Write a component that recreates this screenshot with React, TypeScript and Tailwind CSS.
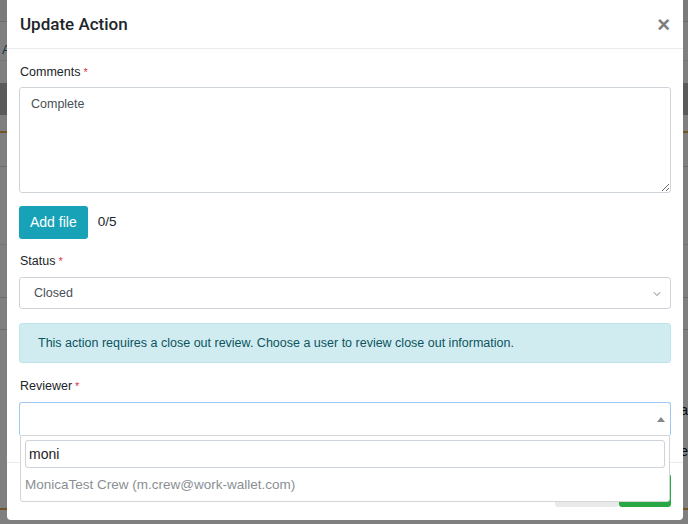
import { ChevronDown } from "lucide-react";

function Req() {
  return <span className="text-[#dc3545] text-[11px] align-top ml-[3px]">*</span>;
}

function Backdrop() {
  // the page that sits behind the modal, only its edges show
  return (
    <div className="flex flex-col w-full h-full bg-white">
      <div className="h-[22px] shrink-0 bg-[#f4f4f4] border-b border-[#d8d8d8]" />
      <div className="h-[18px] shrink-0" />
      <div className="h-[20px] shrink-0 flex items-center pl-[2px] text-[13px] text-[#2a6f8f]">A</div>
      <div className="h-[23px] shrink-0 border-t border-[#ececec]" />
      <div className="h-[32px] shrink-0 bg-[#b4b4b4]" />
      <div className="h-[18px] shrink-0 border-b-2 border-[#e0a848]" />
      <div className="h-[34px] shrink-0 border-b border-[#d8d8d8]" />
      <div className="h-[78px] shrink-0 border-b border-[#e4e4e4]" />
      <div className="h-[53px] shrink-0 border-b border-[#d8d8d8]" />
      <div className="h-[32px] shrink-0 border-b border-[#d8d8d8]" />
      <div className="h-[70px] shrink-0" />
      <div className="h-[20px] shrink-0 flex items-center justify-end text-[14px] text-[#111]">a</div>
      <div className="h-[21px] shrink-0" />
      <div className="h-[20px] shrink-0 flex items-center justify-end text-[14px] text-[#111]">e</div>
      <div className="h-[49px] shrink-0 border-b-2 border-[#e0a848]" />
    </div>
  );
}

export default function App() {
  return (
    <div className="relative w-[688px] h-[524px] overflow-hidden font-['Liberation_Sans',Arial,sans-serif] text-[#212529]">
      <Backdrop />
      <div className="absolute inset-0 bg-black/50" />

      <div className="absolute left-[7px] top-0 w-[676px] h-[520px] bg-white rounded-b-[4px] flex flex-col">
        {/* header */}
        <div className="h-[49px] shrink-0 border-b border-[#e9ecef] flex items-center justify-between pl-[13px] pr-[13px] pt-[1px]">
          <h5 className="font-['Roboto',Arial,sans-serif] text-[17px] font-medium text-[#212529]">Update Action</h5>
          <span className="text-[22px] font-bold leading-none text-[#7d7d7d]">×</span>
        </div>

        {/* body */}
        <div className="flex-1 px-[12px] pt-[13px] flex flex-col">
          <label className="text-[12.5px] leading-[20px] mb-[5px] pl-[1px]">
            Comments
            <Req />
          </label>
          <textarea
            readOnly
            defaultValue="Complete"
            className="h-[106px] w-full border border-[#ced4da] rounded-[3px] px-[11px] py-[6px] text-[12.5px] leading-[20px] text-[#495057] outline-none"
          />

          <div className="flex items-center gap-[10px] mt-[13px]">
            <button className="h-[33px] px-[11px] rounded-[3px] bg-[#17a2b8] text-white text-[14px]">Add file</button>
            <span className="text-[13.5px]">0/5</span>
          </div>

          <label className="text-[12.5px] leading-[20px] mt-[12px] mb-[6px] pl-[1px]">
            Status
            <Req />
          </label>
          <div className="h-[32px] border border-[#ced4da] rounded-[3px] flex items-center justify-between pl-[14px] pr-[7px] text-[12.5px] text-[#495057] pt-[1px]">
            <span>Closed</span>
            <ChevronDown size={12} strokeWidth={1.5} className="text-[#555]" />
          </div>

          <div className="mt-[14px] h-[40px] rounded-[3px] bg-[#d1ecf1] border border-[#bee5eb] text-[#0c5460] text-[12.5px] flex items-center pl-[18px] pt-[1px]">
            This action requires a close out review. Choose a user to review close out information.
          </div>

          <label className="text-[12.5px] leading-[20px] mt-[13px] mb-[6px] pl-[1px]">
            Reviewer
            <Req />
          </label>
          <div className="relative">
            <div className="h-[33px] border border-b-0 border-[#9ec9f5] rounded-t-[3px] flex items-center justify-end pr-[5px]">
              <span className="w-0 h-0 border-l-[4px] border-r-[4px] border-b-[5px] border-l-transparent border-r-transparent border-b-[#888]" />
            </div>
            <div className="absolute z-10 left-[1px] right-[1px] top-full bg-white border border-[#d5d5d5] rounded-b-[3px] flex flex-col">
              <div className="px-[4px] pt-[4px]">
                <div className="h-[28px] border border-[#ccd3da] rounded-[3px] flex items-center pl-[3px] pt-[1px] text-[14px] text-[#222]">moni</div>
              </div>
              <div className="h-[33px] flex items-center pl-[4px] pt-[2px] text-[13.5px] text-[#8a8f94]">
                MonicaTest Crew (m.crew@work-wallet.com)
              </div>
            </div>
          </div>
        </div>

        {/* footer */}
        <div className="h-[58px] shrink-0 border-t border-[#e9ecef] flex items-end justify-end px-[12px] pb-[13px]">
          <button className="h-[33px] w-[64px] rounded-[3px] bg-[#e9e9e9] text-[13.5px] text-[#333]">Cancel</button>
          <button className="h-[33px] w-[52px] rounded-[3px] bg-[#28a745] text-[13.5px] text-white">Save</button>
        </div>
      </div>
    </div>
  );
}
